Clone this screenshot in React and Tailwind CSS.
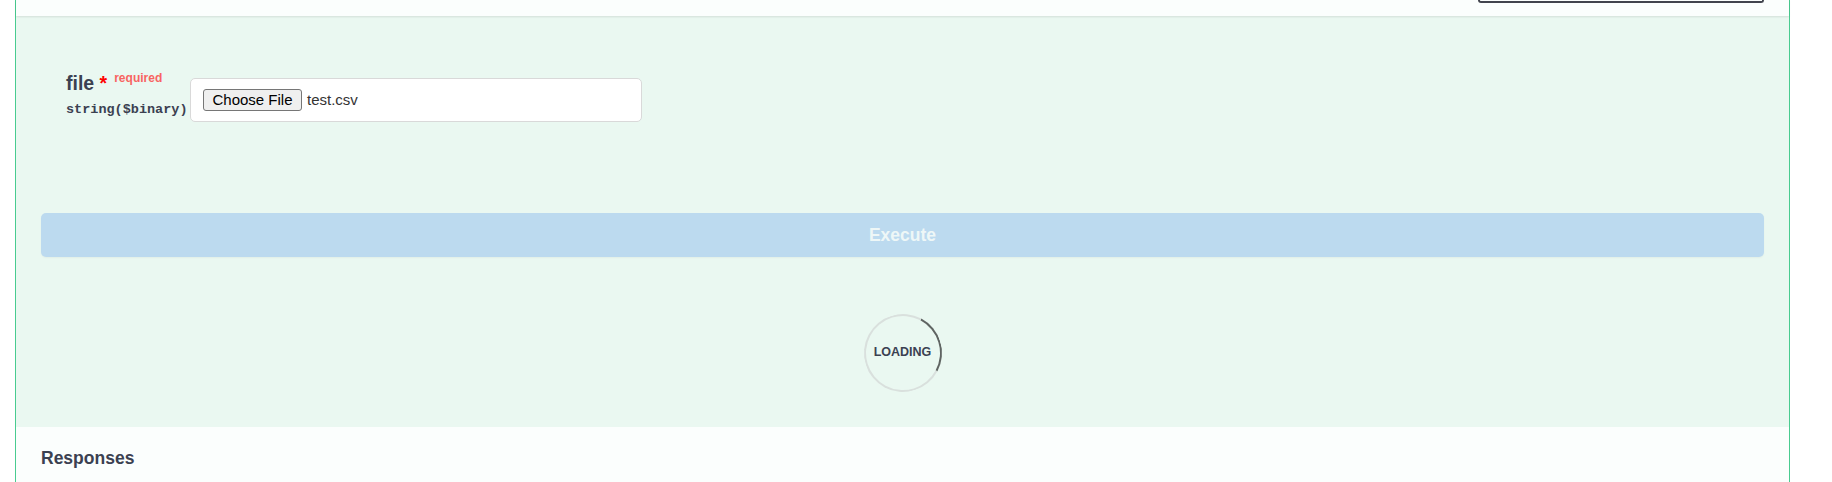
import React from 'react';

const sans = { fontFamily: '"Liberation Sans", Arial, sans-serif' };

function ParameterRow() {
  return (
    <div className="flex items-start pl-[25px] pt-[58px]">
      <div className="w-[124px] shrink-0">
        <div className="flex items-start">
          <span className="text-[19.5px] leading-[19px] font-bold text-[#3b4151]">
            file<span className="text-[#ff0000]">&nbsp;*</span>
          </span>
          <span className="ml-[7px] -mt-[2px] text-[12px] leading-none font-bold text-[#f86462]">required</span>
        </div>
        <div
          className="mt-[9px] text-[13.5px] leading-[16px] font-bold text-[#3b4151] whitespace-nowrap"
          style={{ fontFamily: '"Liberation Mono", "DejaVu Sans Mono", monospace' }}
        >
          string($binary)
        </div>
      </div>
      <div className="mt-[4px] flex h-[44px] w-[452px] items-center rounded-[5px] border border-[#d9d9d9] bg-white pl-[12px]">
        <button
          type="button"
          className="flex h-[22px] w-[99px] items-center justify-center rounded-[3px] border border-[#767676] bg-[#efefef] text-[15px] text-black"
        >
          Choose File
        </button>
        <span className="ml-[5px] text-[15px] text-[#333333]">test.csv</span>
      </div>
    </div>
  );
}

function Loading() {
  return (
    <div className="relative mx-auto mt-[57px] flex h-[78px] w-[78px] items-center justify-center">
      <div className="absolute inset-0 rotate-[73deg] rounded-full border-2 border-[#d9e0dd] border-t-[#5f6462]" />
      <span className="-mt-[2px] text-[12.5px] font-bold text-[#3b4151]">LOADING</span>
    </div>
  );
}

export default function App() {
  return (
    <div className="flex h-[482px] overflow-hidden bg-white" style={sans}>
      <div className="ml-[15px] flex w-[1775px] flex-col border-x border-[#49cc90] bg-[#eaf8f1]">
        <div className="relative z-10 flex h-[16px] shrink-0 justify-end bg-[#fbfefd] px-[25px] shadow-[0_1px_2px_rgba(0,0,0,0.1)]">
          <div className="h-[3px] w-[286px] rounded-b-[5px] border-2 border-t-0 border-[#41444e]" />
        </div>

        <div className="flex h-[411px] shrink-0 flex-col px-[25px]">
          <ParameterRow />
          <button
            type="button"
            className="mt-[91px] h-[44px] w-full shrink-0 rounded-[5px] bg-[#bcdaef] text-[17.5px] font-bold text-[#eef7f7] shadow-[0_1px_2px_rgba(0,0,0,0.04)]"
          >
            Execute
          </button>
          <Loading />
        </div>

        <div className="flex-1 bg-[#fbfefd] px-[25px] pt-[21px]">
          <h4 className="text-[17.5px] leading-[20px] font-bold text-[#3b4151]">Responses</h4>
        </div>
      </div>
    </div>
  );
}
